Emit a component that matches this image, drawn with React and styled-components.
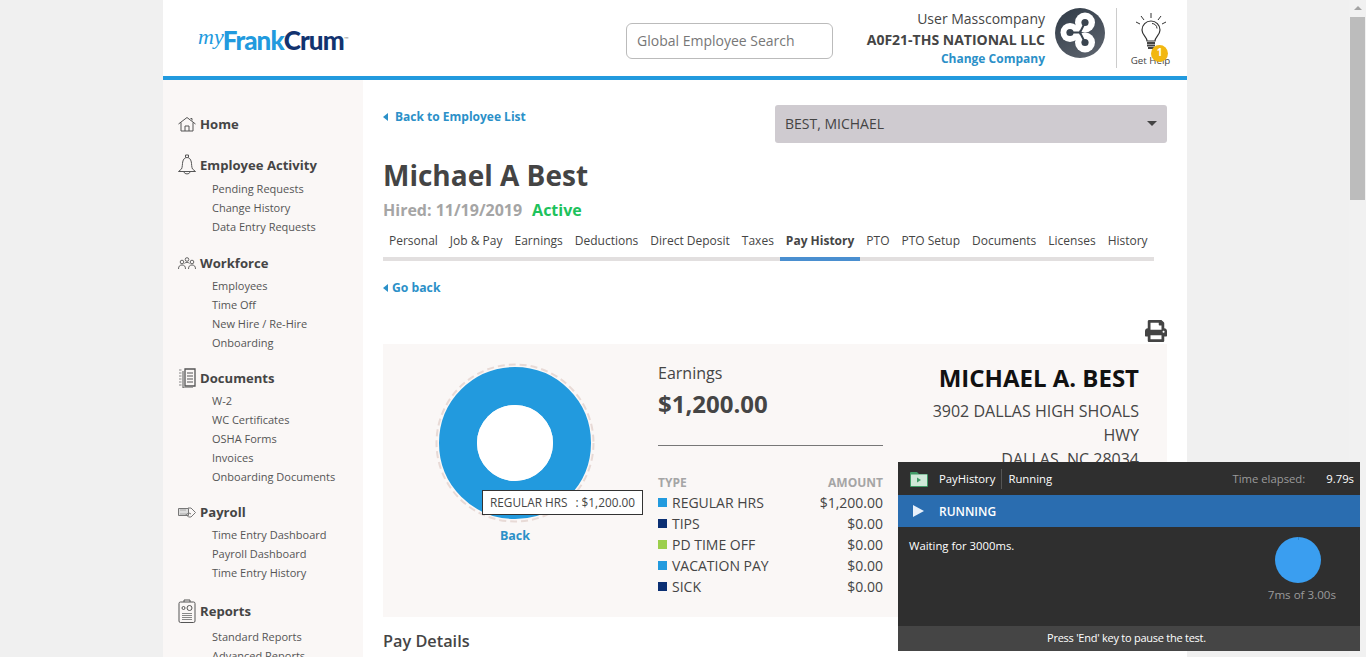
import React from "react";
import styled, { createGlobalStyle } from "styled-components";
import { FaPrint } from "react-icons/fa";

const GlobalStyle = createGlobalStyle`
  html, body {
    margin: 0;
    height: 100%;
    overflow: hidden;
    background: #f0f0f0;
    font-family: "Open Sans", "Liberation Sans", sans-serif;
    color: #454545;
  }
`;

const NAV = [
  { title: "Home", icon: "home" },
  { title: "Employee Activity", icon: "bell", height: 22, items: ["Pending Requests", "Change History", "Data Entry Requests"] },
  { title: "Workforce", icon: "people", items: ["Employees", "Time Off", "New Hire / Re-Hire", "Onboarding"] },
  { title: "Documents", icon: "docs", items: ["W-2", "WC Certificates", "OSHA Forms", "Invoices", "Onboarding Documents"] },
  { title: "Payroll", icon: "pay", items: ["Time Entry Dashboard", "Payroll Dashboard", "Time Entry History"] },
  { title: "Reports", icon: "reports", height: 25, items: ["Standard Reports", "Advanced Reports"] },
];

const TABS = ["Personal", "Job & Pay", "Earnings", "Deductions", "Direct Deposit", "Taxes", "Pay History", "PTO", "PTO Setup", "Documents", "Licenses", "History"];

const ROWS = [
  { type: "REGULAR HRS", amount: "$1,200.00", color: "#229ade" },
  { type: "TIPS", amount: "$0.00", color: "#0b2f73" },
  { type: "PD TIME OFF", amount: "$0.00", color: "#9ccf4c" },
  { type: "VACATION PAY", amount: "$0.00", color: "#229ade" },
  { type: "SICK", amount: "$0.00", color: "#0b2f73" },
];

const NavIcon = ({ name }) => {
  const common = { fill: "none", stroke: "#555", strokeWidth: 1 };
  if (name === "home")
    return (
      <svg width="18" height="16" viewBox="0 0 18 16" {...common}>
        <path d="M.5 8 9 1.500 17.500 8" />
        <path d="M3 6.500V15h12V6.500M7 15v-5h4v5" />
        <path d="M12.500 2.500h1.500v2" />
      </svg>
    );
  if (name === "bell")
    return (
      <svg width="18" height="22" viewBox="0 0 18 22" {...common}>
        <path d="M7.500 3.500V1h3v2.500M3.500 15c1-2 .8-5 1.200-7C5.200 5 7 3.500 9 3.500S12.800 5 13.300 8c.4 2 .2 5 1.200 7l3 2.500H.5z" />
        <path d="M6 18c.5 2.500 5.500 2.500 6 0" />
      </svg>
    );
  if (name === "people")
    return (
      <svg width="18" height="13" viewBox="0 0 18 13" {...common} strokeWidth="0.9">
        <circle cx="9" cy="2.500" r="1.800" />
        <circle cx="4" cy="5" r="1.800" />
        <circle cx="14" cy="5" r="1.800" />
        <path d="M.5 12c0-3 1.500-4 3.500-4s3.500 1 3.500 4M10.500 12c0-3 1.500-4 3.500-4s3.500 1 3.500 4M6.500 6.500c.5-.7 1.500-1.200 2.500-1.200s2 .5 2.500 1.200" />
      </svg>
    );
  if (name === "docs")
    return (
      <svg width="18" height="20" viewBox="0 0 18 20" {...common}>
        <path d="M7 1h10v17H7z" strokeWidth="1.300" />
        <path d="M5 3v17h10" />
        <path d="M9 5h6M9 8h6M9 11h6M9 14h6" strokeWidth="1.200" />
        <path d="M1 2h2.500M1 5h2.500M1 8h2.500M1 11h2.500M1 14h2.500M1 17h2.500" stroke="#888" strokeWidth="1.200" />
      </svg>
    );
  if (name === "pay")
    return (
      <svg width="18" height="11" viewBox="0 0 18 11" fill="none" stroke="#777" strokeWidth="1">
        <path d="M.5 1.500h10v7H.5z" fill="#ddd" />
        <path d="M2 3h6M2 7h6" stroke="#aaa" />
        <path d="M10 1h3l4.500 4.500L13 10h-2.500L8 7.500l3-1.500 2 1" />
      </svg>
    );
  return (
    <svg width="18" height="24" viewBox="0 0 18 24" {...common}>
      <rect x="1" y="3" width="16" height="20.500" rx="1.500" />
      <path d="M6 3V1h6v2" />
      <circle cx="5.500" cy="9" r="1.500" />
      <circle cx="11.500" cy="9" r="2.500" />
      <path d="M4 14.500h10M4 16.500h10M4 18.500h10M4 20.500h10" stroke="#888" />
    </svg>
  );
};

const App = () => (
  <>
    <GlobalStyle />
    <Page>
      <Column>
        <Header>
          <Logo>
            <LogoMy>my</LogoMy>
            <LogoFrank>Frank</LogoFrank>
            <LogoCrum>Crum</LogoCrum>
            <LogoMark>™</LogoMark>
          </Logo>
          <Search placeholder="Global Employee Search" />
          <UserBlock>
            <UserName>User Masscompany</UserName>
            <CompanyName>A0F21-THS NATIONAL LLC</CompanyName>
            <ChangeCompany>Change Company</ChangeCompany>
          </UserBlock>
          <Avatar>
            <svg width="50" height="50" viewBox="0 0 50 50">
              <defs>
                <linearGradient id="av" x1="0" y1="0" x2="0.600" y2="1">
                  <stop offset="0" stopColor="#2f3a46" />
                  <stop offset="1" stopColor="#59606a" />
                </linearGradient>
              </defs>
              <circle cx="25" cy="25" r="25" fill="url(#av)" />
              <circle cx="15" cy="24.500" r="9.500" fill="#fff" />
              <circle cx="30" cy="14.500" r="10" fill="#fff" />
              <circle cx="30" cy="34.500" r="10" fill="#fff" />
              <path d="M15 24.500h10L30 14.500M25 24.500l5 10" stroke="#3a444f" strokeWidth="2" fill="none" />
              <circle cx="15" cy="24.500" r="3.600" fill="#3a444f" />
              <circle cx="30" cy="14.500" r="3.600" fill="#3a444f" />
              <circle cx="30" cy="34.500" r="3.600" fill="#3a444f" />
            </svg>
          </Avatar>
          <HelpBox>
            <svg width="34" height="36" viewBox="0 0 34 36" fill="none" stroke="#333" strokeWidth="1.200">
              <path d="M17 0v5M7 3l3 4M27 3l-3 4M2 9l4 2M32 9l-4 2" strokeWidth="1" />
              <path d="M13 28c0-4-5-6-5-11a9 9 0 0 1 18 0c0 5-5 7-5 11z" />
              <path d="M18 10.500c2.500 0 5 2 5 5" strokeWidth="1" />
              <path d="M13 30h8M13 32.500h8M14 35h6" strokeWidth="1.800" stroke="#444" />
            </svg>
            <HelpLabel>Get Help</HelpLabel>
            <HelpBadge>1</HelpBadge>
          </HelpBox>
        </Header>
        <Body>
          <Sidebar>
            {NAV.map((group) => (
              <NavGroup key={group.title}>
                <NavTitle $height={group.height}>
                  <IconSlot>
                    <NavIcon name={group.icon} />
                  </IconSlot>
                  {group.title}
                </NavTitle>
                {(group.items || []).map((item) => (
                  <NavItem key={item}>{item}</NavItem>
                ))}
              </NavGroup>
            ))}
          </Sidebar>
          <Main>
            <TopRow>
              <BackLink>
                <Caret />
                Back to Employee List
              </BackLink>
              <EmployeeSelect>
                BEST, MICHAEL
                <SelectCaret />
              </EmployeeSelect>
            </TopRow>
            <Name>Michael A Best</Name>
            <Status>
              <Hired>Hired: 11/19/2019</Hired>
              <Active>Active</Active>
            </Status>
            <Tabs>
              {TABS.map((tab) => (
                <Tab key={tab} $active={tab === "Pay History"}>
                  {tab}
                </Tab>
              ))}
            </Tabs>
            <GoBack>
              <Caret />
              Go back
            </GoBack>
            <PrintRow>
              <FaPrint size={22} color="#444" />
            </PrintRow>
            <Panel>
              <ChartCol>
                <DonutWrap>
                  <svg width="160" height="160" viewBox="0 0 160 160">
                    <circle cx="80" cy="80" r="78.500" fill="none" stroke="#e8dad6" strokeWidth="2" strokeDasharray="7 4" />
                    <circle cx="80" cy="80" r="57" fill="none" stroke="#229ade" strokeWidth="38" />
                    <circle cx="80" cy="80" r="38" fill="#fff" />
                  </svg>
                  <Tooltip>
                    <span>REGULAR HRS</span>
                    <span>: $1,200.00</span>
                  </Tooltip>
                </DonutWrap>
                <ChartBack>Back</ChartBack>
              </ChartCol>
              <EarningsCol>
                <EarningsLabel>Earnings</EarningsLabel>
                <EarningsValue>$1,200.00</EarningsValue>
                <Rule />
                <TableHead>
                  <span>TYPE</span>
                  <span>AMOUNT</span>
                </TableHead>
                {ROWS.map((row) => (
                  <Row key={row.type}>
                    <Swatch $color={row.color} />
                    <RowType>{row.type}</RowType>
                    <span>{row.amount}</span>
                  </Row>
                ))}
              </EarningsCol>
              <AddressCol>
                <AddressName>MICHAEL A. BEST</AddressName>
                <AddressLine>3902 DALLAS HIGH SHOALS HWY</AddressLine>
                <AddressLine>DALLAS, NC 28034</AddressLine>
              </AddressCol>
            </Panel>
            <SectionTitle>Pay Details</SectionTitle>
          </Main>
        </Body>
      </Column>
      <Scrollbar>
        <ScrollArrow />
        <ScrollThumb />
      </Scrollbar>
      <Runner>
        <RunnerHead>
          <svg width="18" height="16" viewBox="0 0 18 16">
            <path d="M0 2a1 1 0 0 1 1-1h6l2 2h8a1 1 0 0 1 1 1v11a1 1 0 0 1-1 1H1a1 1 0 0 1-1-1z" fill="#3f9a66" />
            <rect x="1" y="3.500" width="16" height="11.500" fill="#cfe8d8" />
            <path d="M7 6.500v5l4-2.500z" fill="#3f9a66" />
          </svg>
          <RunnerName>PayHistory</RunnerName>
          <RunnerState>Running</RunnerState>
          <RunnerElapsed>Time elapsed:</RunnerElapsed>
          <RunnerTime>9.79s</RunnerTime>
        </RunnerHead>
        <RunnerBar>
          <RunnerPlay />
          RUNNING
        </RunnerBar>
        <RunnerBody>
          <span>Waiting for 3000ms.</span>
          <RunnerTimer>
            <RunnerPie />
            <span>7ms of 3.00s</span>
          </RunnerTimer>
        </RunnerBody>
        <RunnerFoot>Press 'End' key to pause the test.</RunnerFoot>
      </Runner>
    </Page>
  </>
);

const Page = styled.div`
  height: 657px;
  overflow: hidden;
  display: flex;
  justify-content: flex-start;
  padding-left: 163px;
  box-sizing: border-box;
`;

const Column = styled.div`
  width: 1024px;
  flex: none;
  background: #fff;
  height: 657px;
  overflow: hidden;
`;

const Header = styled.header`
  height: 76px;
  border-bottom: 4px solid #229ade;
  display: flex;
  align-items: center;
  background: #fff;
`;

const Logo = styled.div`
  margin: 4px 0 0 35px;
  width: 150px;
  flex: none;
  display: flex;
  align-items: baseline;
  font-family: "Lato", sans-serif;
  font-weight: 900;
  font-size: 26px;
  letter-spacing: -0.9px;
`;

const LogoMy = styled.span`
  font-family: "Liberation Serif", serif;
  font-style: italic;
  font-weight: 400;
  font-size: 22px;
  letter-spacing: 0;
  color: #229ade;
  margin-right: -1px;
  transform: translateY(-6px);
`;

const LogoFrank = styled.span`
  color: #229ade;
`;

const LogoCrum = styled.span`
  color: #12336f;
`;

const LogoMark = styled.span`
  font-size: 6px;
  font-weight: 400;
  letter-spacing: 0;
  color: #888;
  transform: translateY(-9px);
`;

const Search = styled.input`
  margin: 6px 0 0 278px;
  width: 207px;
  height: 36px;
  box-sizing: border-box;
  flex: none;
  border: 1px solid #bbb;
  border-radius: 6px;
  padding: 0 10px 2px;
  font: 14px "Open Sans", sans-serif;
  outline: none;
  &::placeholder {
    color: #777;
    opacity: 1;
  }
`;

const UserBlock = styled.div`
  flex: 1;
  text-align: right;
  display: flex;
  flex-direction: column;
`;

const UserName = styled.div`
  font-size: 14px;
  line-height: 20px;
`;

const CompanyName = styled.div`
  font-size: 14px;
  font-weight: 700;
  line-height: 21px;
`;

const ChangeCompany = styled.div`
  font-size: 12px;
  font-weight: 700;
  line-height: 17px;
  color: #2b90c8;
`;

const Avatar = styled.div`
  flex: none;
  margin: -10px 11px 0 10px;
  width: 50px;
  height: 50px;
`;

const HelpBox = styled.div`
  flex: none;
  width: 68px;
  height: 60px;
  margin-right: 3px;
  padding-top: 5px;
  border-left: 1px solid #ccc;
  display: flex;
  flex-direction: column;
  align-items: center;
  position: relative;
  box-sizing: border-box;
`;

const HelpLabel = styled.div`
  font-size: 9.75px;
  line-height: 12px;
  margin-top: 6px;
`;

const HelpBadge = styled.div`
  position: absolute;
  left: 34px;
  top: 37px;
  width: 17px;
  height: 17px;
  border-radius: 50%;
  background: #f2b711;
  color: #fff;
  font-size: 10px;
  font-weight: 700;
  line-height: 15px;
  text-align: center;
`;

const Body = styled.div`
  display: flex;
  height: 577px;
`;

const Sidebar = styled.nav`
  width: 200px;
  flex: none;
  background: #faf7f6;
  padding: 34px 0 0 15px;
  box-sizing: border-box;
  overflow: hidden;
`;

const NavGroup = styled.div`
  margin-bottom: 16.5px;
  &:nth-child(1) {
    margin-bottom: 19.5px;
  }
  &:nth-child(2) {
    margin-bottom: 17.5px;
  }
  &:nth-child(3) {
    margin-bottom: 15.5px;
  }
`;

const NavTitle = styled.div`
  display: flex;
  align-items: center;
  height: ${(p) => p.$height || 20}px;
  margin-bottom: 3px;
  font-size: 13.1px;
  font-weight: 700;
  color: #454545;
`;

const IconSlot = styled.span`
  width: 22px;
  display: flex;
  align-items: center;
  flex: none;
`;

const NavItem = styled.div`
  font-size: 11px;
  line-height: 19px;
  padding-left: 34px;
  color: #555;
`;

const Main = styled.main`
  flex: none;
  width: 784px;
  margin-left: 20px;
`;

const TopRow = styled.div`
  display: flex;
  justify-content: space-between;
  align-items: flex-start;
  padding-top: 25px;
`;

const BackLink = styled.a`
  display: flex;
  align-items: center;
  font-size: 12px;
  font-weight: 700;
  color: #2b90c8;
  line-height: 22px;
  margin-top: 1px;
`;

const Caret = styled.span`
  width: 0;
  height: 0;
  border-top: 4px solid transparent;
  border-bottom: 4px solid transparent;
  border-right: 5px solid #2b90c8;
  margin-right: 7px;
`;

const EmployeeSelect = styled.div`
  width: 392px;
  height: 38px;
  box-sizing: border-box;
  background: #cfcbd0;
  border-radius: 3px;
  padding: 0 10px 1px;
  display: flex;
  align-items: center;
  justify-content: space-between;
  font-size: 14px;
  color: #444;
`;

const SelectCaret = styled.span`
  border-left: 5px solid transparent;
  border-right: 5px solid transparent;
  border-top: 5px solid #444;
`;

const Name = styled.h1`
  margin: 12px 0 0;
  font-size: 28px;
  line-height: 40px;
  font-weight: 700;
  color: #444;
`;

const Status = styled.div`
  display: flex;
  gap: 10px;
  font-size: 16px;
  font-weight: 700;
  line-height: 24px;
  margin-top: 3px;
`;

const Hired = styled.span`
  color: #a5a5a5;
`;

const Active = styled.span`
  color: #1dc25c;
`;

const Tabs = styled.div`
  display: flex;
  width: 771px;
  margin-top: 8px;
  border-bottom: 4px solid #e2dfdf;
  height: 27px;
`;

const Tab = styled.div`
  padding: 0 6px;
  font-size: 12px;
  line-height: 21px;
  height: 27px;
  white-space: nowrap;
  font-weight: ${(p) => (p.$active ? 700 : 400)};
  border-bottom: ${(p) => (p.$active ? "4px solid #4a8fd0" : "none")};
`;

const GoBack = styled.a`
  display: flex;
  align-items: center;
  margin-top: 17px;
  font-size: 12.2px;
  font-weight: 700;
  line-height: 20px;
  color: #2b90c8;
  & > span {
    margin-right: 4px;
  }
`;

const PrintRow = styled.div`
  display: flex;
  justify-content: flex-end;
  margin-top: 22px;
  height: 24px;
`;

const Panel = styled.section`
  background: #faf7f6;
  height: 273px;
  display: flex;
`;

const ChartCol = styled.div`
  width: 275px;
  flex: none;
  display: flex;
  flex-direction: column;
  align-items: center;
  padding: 19px 11px 0 0;
  box-sizing: border-box;
`;

const DonutWrap = styled.div`
  width: 160px;
  height: 160px;
  position: relative;
`;

const Tooltip = styled.div`
  position: absolute;
  left: 47px;
  top: 127px;
  width: 161px;
  height: 25px;
  box-sizing: border-box;
  background: #fff;
  border: 1px solid #333;
  font-size: 11.8px;
  line-height: 23px;
  padding: 0 7px;
  display: flex;
  justify-content: space-between;
  white-space: nowrap;
`;

const ChartBack = styled.a`
  font-size: 12.5px;
  font-weight: 700;
  color: #2b90c8;
  line-height: 20px;
  margin-top: 3px;
`;

const EarningsCol = styled.div`
  width: 225px;
  flex: none;
`;

const EarningsLabel = styled.div`
  font-size: 16px;
  line-height: 24px;
  margin-top: 17px;
`;

const EarningsValue = styled.div`
  font-size: 24px;
  font-weight: 700;
  line-height: 36px;
  margin-top: 1px;
`;

const Rule = styled.div`
  height: 1px;
  background: #777;
  margin-top: 23px;
`;

const TableHead = styled.div`
  display: flex;
  justify-content: space-between;
  font-size: 12px;
  font-weight: 700;
  color: #a5a5a5;
  line-height: 18px;
  margin-top: 28px;
`;

const Row = styled.div`
  display: flex;
  align-items: center;
  font-size: 14px;
  line-height: 21px;
`;

const Swatch = styled.span`
  width: 9px;
  height: 9px;
  background: ${(p) => p.$color};
  margin-right: 5px;
`;

const RowType = styled.span`
  flex: 1;
`;

const AddressCol = styled.div`
  width: 213px;
  margin-left: 43px;
  flex: none;
  text-align: right;
  padding-top: 17px;
`;

const AddressName = styled.div`
  font-size: 24px;
  font-weight: 700;
  line-height: 34px;
  color: #111;
  white-space: nowrap;
  margin-bottom: 4px;
`;

const AddressLine = styled.div`
  font-size: 16px;
  line-height: 24px;
`;

const SectionTitle = styled.h2`
  margin: 14px 0 0;
  font-size: 16.3px;
  font-weight: 600;
  line-height: 20px;
`;

const Scrollbar = styled.div`
  position: fixed;
  right: 0;
  top: 0;
  width: 17px;
  height: 657px;
  background: #f1f1f1;
`;

const ScrollArrow = styled.div`
  width: 0;
  margin: 6px auto 0;
  border-left: 4px solid transparent;
  border-right: 4px solid transparent;
  border-bottom: 4px solid #a3a3a3;
`;

const ScrollThumb = styled.div`
  margin: 7px 1px 0;
  height: 183px;
  background: #bcbcbc;
`;

const Runner = styled.div`
  position: fixed;
  left: 898px;
  top: 462px;
  width: 462px;
  height: 189px;
  background: #2f2f2f;
  color: #fff;
  display: flex;
  flex-direction: column;
  font-size: 11.3px;
`;

const RunnerHead = styled.div`
  height: 33px;
  display: flex;
  align-items: center;
  padding: 0 6px 0 12px;
  flex: none;
`;

const RunnerName = styled.span`
  margin-left: 11px;
  padding-right: 6px;
  border-right: 1px solid #555;
  line-height: 20px;
`;

const RunnerState = styled.span`
  margin-left: 6px;
  flex: 1;
`;

const RunnerElapsed = styled.span`
  color: #9b9b9b;
  margin-right: 21px;
`;

const RunnerTime = styled.span``;

const RunnerBar = styled.div`
  height: 32px;
  flex: none;
  background: #2a6db0;
  display: flex;
  align-items: center;
  padding-left: 15px;
  font-size: 12px;
  font-weight: 600;
`;

const RunnerPlay = styled.span`
  border-top: 6px solid transparent;
  border-bottom: 6px solid transparent;
  border-left: 11px solid #e8f0fa;
  margin-right: 15px;
`;

const RunnerBody = styled.div`
  flex: 1;
  display: flex;
  justify-content: space-between;
  padding: 10px 24px 0 11px;
  line-height: 18px;
`;

const RunnerTimer = styled.div`
  display: flex;
  flex-direction: column;
  align-items: center;
  color: #9b9b9b;
  font-size: 11.6px;
  gap: 3px;
`;

const RunnerPie = styled.div`
  width: 46px;
  height: 46px;
  margin-right: 7px;
  border-radius: 50%;
  background: conic-gradient(#2c86d2 0 0.4%, #3a9ef0 0.4%);
`;

const RunnerFoot = styled.div`
  height: 25px;
  flex: none;
  box-sizing: border-box;
  padding-right: 5px;
  background: #454545;
  text-align: center;
  line-height: 23px;
  font-size: 11px;
  letter-spacing: -0.25px;
`;

export default App;
